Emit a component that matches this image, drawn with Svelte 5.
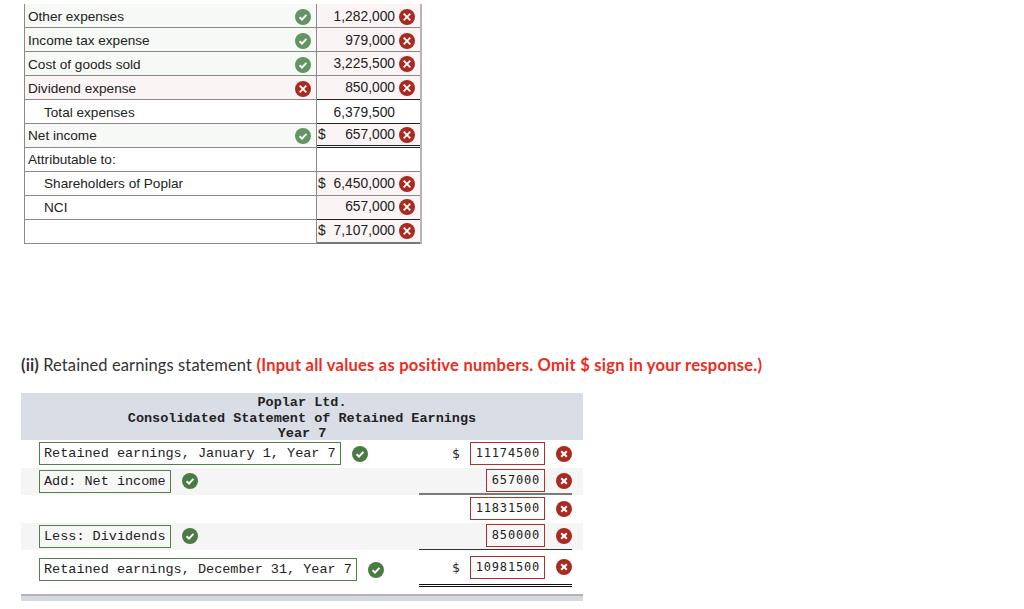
<script>
  const expenses = [
    { label: 'Other expenses', ok: true, value: '1,282,000' },
    { label: 'Income tax expense', ok: true, value: '979,000' },
    { label: 'Cost of goods sold', ok: true, value: '3,225,500' },
    { label: 'Dividend expense', ok: false, value: '850,000' },
  ]
</script>

{#snippet good(cls = '')}
  <svg class="mark {cls}" viewBox="0 0 16 16" aria-hidden="true">
    <circle cx="8" cy="8" r="8" fill="currentColor" />
    <path d="M4.6 8.3 7 10.6 11.4 5.9" fill="none" stroke="#fff" stroke-width="2" />
  </svg>
{/snippet}

{#snippet bad()}
  <svg class="mark bad" viewBox="0 0 16 16" aria-hidden="true">
    <circle cx="8" cy="8" r="8" fill="#a92a20" />
    <path d="M5.2 5.2 10.8 10.8M10.8 5.2 5.2 10.8" fill="none" stroke="#fff" stroke-width="2" />
  </svg>
{/snippet}

{#snippet cross()}
  <svg class="mark bad" viewBox="0 0 16 16" aria-hidden="true">
    <circle cx="8" cy="8" r="8" fill="#a92a20" />
    <path d="M4.7 4.7 11.3 11.3M11.3 4.7 4.7 11.3" fill="none" stroke="#fff" stroke-width="1.8" />
  </svg>
{/snippet}

<main>
  <div class="income">
    {#each expenses as row, i}
      <div class="row">
        <div class="name low" class:right={row.ok} class:wrong={!row.ok}>
          <span>{row.label}</span>
          {#if row.ok}{@render good('soft')}{:else}{@render cross()}{/if}
        </div>
        <div class="num wrong" class:down={i < 2} class:sum={i === 3}><b>{row.value}</b>{@render cross()}</div>
      </div>
    {/each}
    <div class="row">
      <div class="name indent low"><span>Total expenses</span></div>
      <div class="num sum down"><b>6,379,500</b><i class="blank"></i></div>
    </div>
    <div class="row">
      <div class="name right"><span>Net income</span>{@render good('soft')}</div>
      <div class="num wrong dbl"><span>$</span><b>657,000</b>{@render cross()}</div>
    </div>
    <div class="row">
      <div class="name"><span>Attributable to:</span></div>
      <div class="num"></div>
    </div>
    <div class="row">
      <div class="name indent"><span>Shareholders of Poplar</span></div>
      <div class="num wrong"><span>$</span><b>6,450,000</b>{@render cross()}</div>
    </div>
    <div class="row">
      <div class="name indent"><span>NCI</span></div>
      <div class="num wrong sum up"><b>657,000</b>{@render cross()}</div>
    </div>
    <div class="row">
      <div class="name"></div>
      <div class="num wrong total"><span>$</span><b>7,107,000</b>{@render cross()}</div>
    </div>
  </div>

  <p class="title">
    <strong>(ii)</strong> Retained earnings statement
    <em>(Input all values as positive numbers. Omit $ sign in your response.)</em>
  </p>

  <section class="statement">
    <header>
      <div>Poplar Ltd.</div>
      <div>Consolidated Statement of Retained Earnings</div>
      <div>Year 7</div>
    </header>

    <div class="line">
      <div class="desc"><span class="box">Retained earnings, January 1, Year 7</span>{@render good()}</div>
      <div class="amt"><span class="cur">$</span><span class="val">11174500</span></div>
      {@render bad()}
    </div>
    <div class="line alt">
      <div class="desc"><span class="box">Add: Net income</span>{@render good()}</div>
      <div class="amt under"><span class="val">657000</span></div>
      {@render bad()}
    </div>
    <div class="line">
      <div class="desc"></div>
      <div class="amt"><span class="val">11831500</span></div>
      {@render bad()}
    </div>
    <div class="line alt">
      <div class="desc"><span class="box">Less: Dividends</span>{@render good()}</div>
      <div class="amt thin"><span class="val">850000</span></div>
      {@render bad()}
    </div>
    <div class="line last">
      <div class="desc"><span class="box">Retained earnings, December 31, Year 7</span>{@render good()}</div>
      <div class="amt double"><span class="cur">$</span><span class="val">10981500</span></div>
      {@render bad()}
    </div>
    <div class="foot"></div>
  </section>
</main>

<style>
  :global(body) {
    background: #fff;
    color: #222;
  }

  main {
    padding: 4px 0 0 21px;
    height: 605px;
    overflow: hidden;
  }

  .income {
    margin-left: 3px;
    width: 398px;
    box-sizing: border-box;
    font: 13.6px/16px "Liberation Sans", Arial, sans-serif;
    border-left: 1px solid #8a8a8a;
    border-right: 2px solid #b5b5b5;
  }

  .row {
    display: grid;
    grid-template-columns: 292px 1fr;
    height: 24px;
  }

  .name,
  .num {
    display: flex;
    align-items: center;
    box-sizing: border-box;
    border-bottom: 1px solid #8a8a8a;
  }

  .name {
    justify-content: space-between;
    border-right: 1px solid #8a8a8a;
    padding: 0 5px 0 3px;
  }

  .name.low {
    padding-top: 2px;
  }

  .indent {
    padding-left: 19px;
  }

  .right {
    background: #f6f9f5;
  }

  .wrong {
    background: #faf4f4;
  }

  .num {
    padding: 0 5px 0 1px;
    font-size: 13.8px;
  }

  .num.down {
    padding-top: 2px;
  }

  .num.up {
    padding-bottom: 2px;
  }

  .num b {
    font-weight: 400;
    margin-left: auto;
  }

  .num :global(.mark) {
    margin-left: 4px;
  }

  .blank {
    width: 20px;
  }

  .sum {
    border-bottom-color: #222;
  }

  .dbl {
    border-bottom: 3px double #222;
  }

  .total {
    border-bottom: 2px solid #777;
  }

  .mark {
    width: 16px;
    height: 16px;
    flex: none;
    color: #4b7b45;
  }

  .mark.soft {
    color: #639563;
  }

  .title {
    margin: 111px 0 0;
    font: 16.5px/20px Lato, "Open Sans", sans-serif;
    letter-spacing: 0.1px;
    color: #333;
  }

  .title strong {
    font-weight: 700;
  }

  .title em {
    font-style: normal;
    font-weight: 700;
    letter-spacing: 0.25px;
    color: #ee2b1c;
  }

  .statement {
    margin-top: 18px;
    width: 562px;
    font: 13.5px/16px "Liberation Mono", "Courier New", monospace;
  }

  header {
    background: #d9dde6;
    height: 47px;
    padding-top: 2px;
    box-sizing: border-box;
    text-align: center;
    font-weight: 700;
    line-height: 15.5px;
  }

  .line {
    display: flex;
    align-items: center;
    height: 27.5px;
    padding-right: 11px;
  }

  .line.alt {
    background: #f5f5f5;
  }

  .line.last {
    height: 44px;
    align-items: flex-start;
  }

  .desc {
    flex: 1;
    display: flex;
    align-items: center;
    gap: 11px;
    padding-left: 18px;
  }

  .last .desc {
    padding-top: 8px;
  }

  .box {
    border: 1px solid #4f8148;
    padding: 0 4px;
    line-height: 21px;
    background: #fff;
    white-space: nowrap;
  }

  .alt .box {
    background: #f7f7f7;
  }

  .amt {
    width: 153px;
    display: flex;
    align-items: center;
    justify-content: flex-end;
    align-self: stretch;
    padding-right: 27px;
    box-sizing: border-box;
  }

  .line.last .amt {
    align-items: flex-start;
    align-self: flex-start;
    height: 37px;
    padding-top: 6px;
  }

  .cur {
    font: 13px/23px "DejaVu Sans Mono", monospace;
    margin-right: 10px;
  }

  .val {
    border: 1px solid #b0302a;
    padding: 0 4px 0 5px;
    font: 12px/21px "DejaVu Sans Mono", monospace;
    letter-spacing: 0.8px;
    background: #fff;
  }

  .alt .val {
    background: #f7f7f7;
  }

  .under {
    border-bottom: 2px solid #7a7a7a;
  }

  .thin {
    border-bottom: 1px solid #333;
  }

  .double {
    border-bottom: 3px double #111;
  }

  .line .amt + :global(.mark) {
    margin-left: -16px;
  }

  .line.last .amt + :global(.mark) {
    margin-top: 9px;
  }

  .foot {
    height: 7px;
    box-sizing: border-box;
    background: #d3d8e3;
    border-top: 2px solid #b1b3b8;
  }
</style>
